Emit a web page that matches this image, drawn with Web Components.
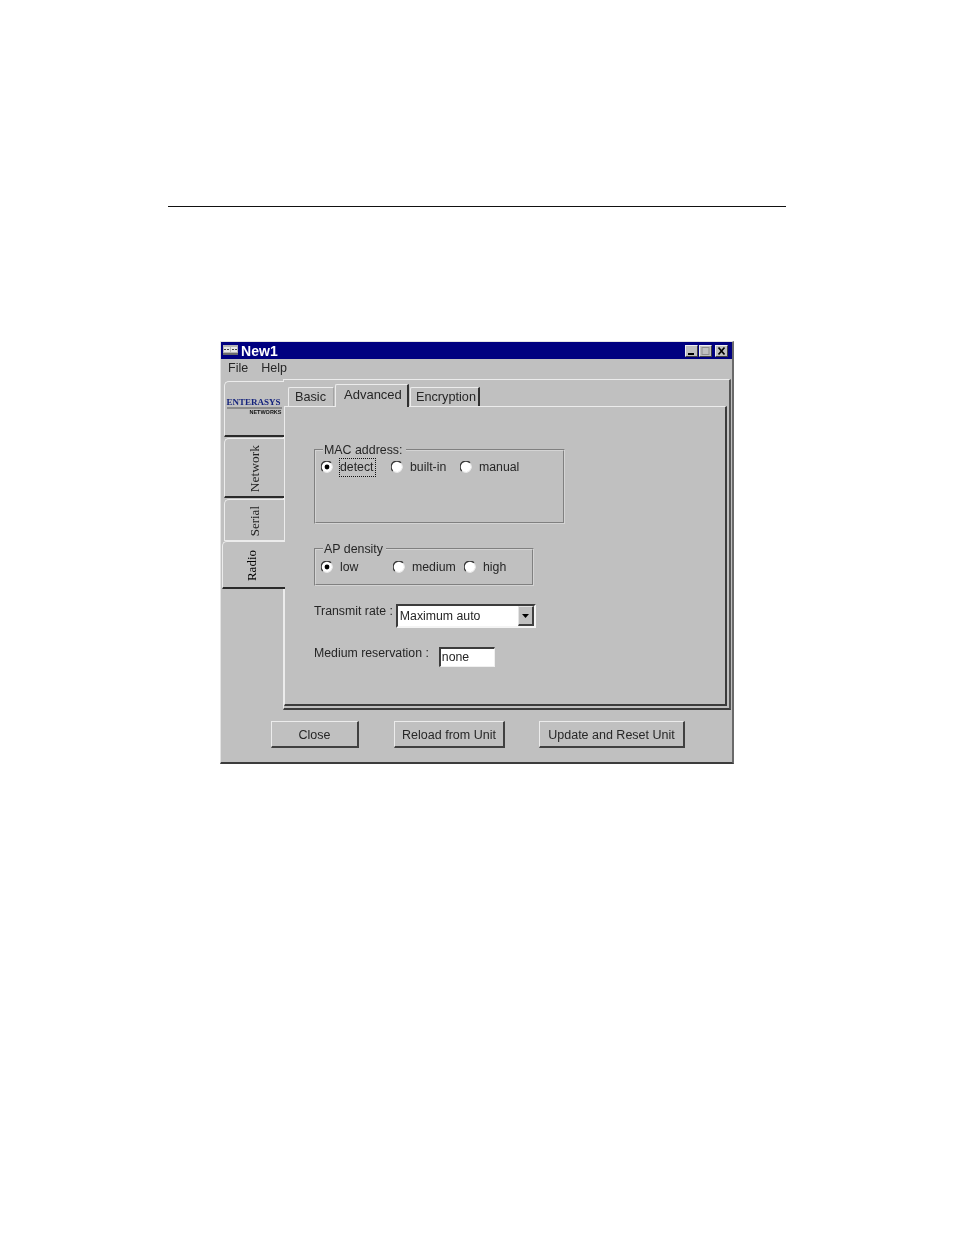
<!DOCTYPE html>
<html>
<head>
<meta charset="utf-8">
<title>New1</title>
<style>
  html, body { margin: 0; padding: 0; background: #fff; }
  body { width: 954px; height: 1235px; overflow: hidden; font-family: "Liberation Sans", Arial, sans-serif; }
</style>
</head>
<body>
<page-rule></page-rule>
<app-window>
  <title-bar slot="title">New1</title-bar>
  <menu-bar slot="menu"><span>File</span><span>Help</span></menu-bar>

  <side-tab slot="side" size="56"><brand-logo></brand-logo></side-tab>
  <side-tab slot="side" size="60" label="Network" font="13.500"></side-tab>
  <side-tab slot="side" size="42" label="Serial" flat></side-tab>
  <side-tab slot="side" size="48" label="Radio" selected></side-tab>

  <page-tab slot="tabs" width="46" pad="6" soft>Basic</page-tab>
  <page-tab slot="tabs" width="74" pad="8" selected>Advanced</page-tab>
  <page-tab slot="tabs" width="70" pad="5">Encryption</page-tab>

  <group-box legend="MAC address:" width="251" height="75" gap="1" style="margin-top:35px">
    <radio-option width="70" checked focused>detect</radio-option>
    <radio-option width="69">built-in</radio-option>
    <radio-option width="80">manual</radio-option>
  </group-box>
  <group-box legend="AP density" width="220" height="38" gap="2" style="margin-top:17px">
    <radio-option width="72" checked>low</radio-option>
    <radio-option width="71">medium</radio-option>
    <radio-option width="60">high</radio-option>
  </group-box>
  <field-row label="Transmit rate :" gap="3" lead="15" style="margin-top:18px"><combo-box>Maximum auto</combo-box></field-row>
  <field-row label="Medium reservation :" gap="10" lead="13" style="margin-top:19px"><text-box>none</text-box></field-row>

  <push-button slot="buttons" width="88">Close</push-button>
  <push-button slot="buttons" width="111" style="margin-left:35px">Reload from Unit</push-button>
  <push-button slot="buttons" width="146" style="margin-left:34px">Update and Reset Unit</push-button>
</app-window>

<script>
const UI_FONT = '"Liberation Sans", Arial, sans-serif';
const SERIF_FONT = '"Liberation Serif", "Times New Roman", serif';

// Thin line over the figure
class PageRule extends HTMLElement {
  constructor() {
    super();
    const shadow = this.attachShadow({ mode: "open" });
    shadow.innerHTML = `<style>
      :host { display: block; width: 618px; height: 1px; margin: 206px 0 0 168px; background: #111; }
    </style>`;
  }
}
customElements.define("page-rule", PageRule);

// Window frame: title, menu, side tabs, tabbed panel, button row
class AppWindow extends HTMLElement {
  constructor() {
    super();
    const shadow = this.attachShadow({ mode: "open" });
    shadow.innerHTML = `<style>
      :host {
        display: block;
        box-sizing: border-box;
        width: 514px;
        height: 423px;
        margin: 134px 0 0 220px;
        background: #c0c0c0;
        color: #262626;
        font: 12.300px ${UI_FONT};
        border-style: solid;
        border-width: 1px 2px 2px 1px;
        border-color: #e4e4e4 #6a6a6a #3c3c3c #e4e4e4;
        filter: blur(0.45px);
      }
      .main { display: flex; height: 331px; }
      .side { width: 62px; padding: 2px 0 0 1px; box-sizing: border-box; display: flex; flex-direction: column; }
      .panel {
        width: 448px;
        box-sizing: border-box;
        border-style: solid;
        border-width: 1px 2px 2px 1px;
        border-color: #ececec #555 #3c3c3c #ececec;
        display: flex;
        flex-direction: column;
      }
      .tabs { display: flex; align-items: flex-end; height: 26px; padding-left: 4px; }
      .page {
        height: 300px;
        width: 443px;
        box-sizing: border-box;
        border-style: solid;
        border-width: 1px 2px 2px 1px;
        border-color: #ececec #3c3c3c #3c3c3c #ececec;
        padding: 0 0 0 29px;
      }
      .buttons { display: flex; margin-top: 11px; padding-left: 50px; }
    </style>
    <slot name="title"></slot>
    <slot name="menu"></slot>
    <div class="main">
      <div class="side"><slot name="side"></slot></div>
      <div class="panel">
        <div class="tabs"><slot name="tabs"></slot></div>
        <div class="page"><slot></slot></div>
      </div>
    </div>
    <div class="buttons"><slot name="buttons"></slot></div>`;
  }
}
customElements.define("app-window", AppWindow);

class TitleBar extends HTMLElement {
  constructor() {
    super();
    const shadow = this.attachShadow({ mode: "open" });
    shadow.innerHTML = `<style>
      :host {
        display: flex;
        align-items: center;
        height: 17px;
        background: #000080;
        color: #fff;
        font: bold 14px ${UI_FONT};
        padding-left: 2px;
      }
      svg { flex: none; margin-right: 3px; }
      .name { flex: 1; letter-spacing: 0.1px; }
      .controls { display: flex; padding-right: 4px; }
      .btn {
        display: block;
        width: 13px;
        height: 12px;
        background: #c0c0c0;
        border-style: solid;
        border-width: 1px;
        border-color: #efefef #404040 #404040 #efefef;
        box-sizing: border-box;
      }
      .max { margin: 0 3px 0 1px; }
    </style>
    <svg width="15" height="11" viewBox="0 0 15 11">
      <rect x="0" y="0" width="15" height="10" fill="#b4b4b4"/>
      <rect x="1" y="2" width="6" height="5" fill="#e6e6e6"/>
      <rect x="8" y="2" width="6" height="5" fill="#e6e6e6"/>
      <rect x="1" y="4" width="2" height="1" fill="#444"/>
      <rect x="4" y="4" width="2" height="1" fill="#444"/>
      <rect x="9" y="4" width="2" height="1" fill="#444"/>
      <rect x="12" y="4" width="2" height="1" fill="#444"/>
      <rect x="0" y="8" width="15" height="2" fill="#6c6c6c"/>
    </svg>
    <span class="name"><slot></slot></span>
    <span class="controls">
      <svg class="btn" style="margin:0" viewBox="0 0 11 10"><rect x="2" y="7" width="6" height="2" fill="#000"/></svg>
      <svg class="btn max" viewBox="0 0 11 10"><rect x="2" y="1.500" width="7" height="7" fill="none" stroke="#8e8e8e"/><rect x="2" y="1" width="7" height="1" fill="#8e8e8e"/></svg>
      <svg class="btn" style="margin:0" viewBox="0 0 11 10"><path d="M2.500 1.500l6 7M8.500 1.500l-6 7" stroke="#000" stroke-width="1.700" fill="none"/></svg>
    </span>`;
  }
}
customElements.define("title-bar", TitleBar);

class MenuBar extends HTMLElement {
  constructor() {
    super();
    const shadow = this.attachShadow({ mode: "open" });
    shadow.innerHTML = `<style>
      :host {
        display: flex;
        height: 20px;
        gap: 13px;
        padding-left: 7px;
        line-height: 18px;
        font-size: 12.500px;
      }
      ::slotted(span) { display: block; }
    </style><slot></slot>`;
  }
}
customElements.define("menu-bar", MenuBar);

// Vertical tab down the left side. Label runs bottom to top.
class SideTab extends HTMLElement {
  constructor() {
    super();
    const shadow = this.attachShadow({ mode: "open" });
    const label = this.getAttribute("label") || "";
    const selected = this.hasAttribute("selected");
    const flat = this.hasAttribute("flat");
    shadow.innerHTML = `<style>
      :host {
        display: flex;
        align-items: center;
        justify-content: center;
        box-sizing: border-box;
        height: ${this.getAttribute("size")}px;
        width: ${selected ? 63 : 60}px;
        margin: ${selected ? "0" : flat ? "0 0 0 2px" : "0 0 1px 2px"};
        padding-top: ${label ? 2 : 0}px;
        border-style: solid;
        border-width: 1px 0 ${flat ? 1 : 2}px 1px;
        border-color: #ececec #000 ${flat ? "#ececec" : "#2a2a2a"} #ececec;
        border-top-left-radius: 5px;
        position: relative;
        z-index: ${selected ? 1 : 0};
        background: #c0c0c0;
      }
      .label {
        writing-mode: vertical-rl;
        transform: rotate(180deg);
        font: ${this.getAttribute("font") || 13}px ${SERIF_FONT};
        color: ${selected ? "#000" : "#222"};
        margin-right: ${selected ? 4 : 0}px;
      }
    </style>
    ${label ? `<span class="label">${label}</span>` : "<slot></slot>"}`;
  }
}
customElements.define("side-tab", SideTab);

class BrandLogo extends HTMLElement {
  constructor() {
    super();
    const shadow = this.attachShadow({ mode: "open" });
    shadow.innerHTML = `<style>
      :host { display: block; width: 55px; margin: 0 1px 3px 0; }
      .top { display: block; font: bold 9px/9px ${SERIF_FONT}; color: #14237c; white-space: nowrap; border-bottom: 2px solid #8c8c8c; }
      .sub { display: block; text-align: right; font: bold 5.500px/7px ${UI_FONT}; color: #111; white-space: nowrap; }
    </style>
    <span class="top">ENTERASYS</span>
    <span class="sub">NETWORKS</span>`;
  }
}
customElements.define("brand-logo", BrandLogo);

class PageTab extends HTMLElement {
  constructor() {
    super();
    const shadow = this.attachShadow({ mode: "open" });
    const selected = this.hasAttribute("selected");
    const soft = this.hasAttribute("soft");
    shadow.innerHTML = `<style>
      :host {
        display: block;
        box-sizing: border-box;
        width: ${this.getAttribute("width")}px;
        height: ${selected ? 23 : 19}px;
        margin: 0 1px ${selected ? -1 : 0}px 0;
        position: relative;
        z-index: ${selected ? 1 : 0};
        background: #c0c0c0;
        border-style: solid;
        border-width: 1px ${soft ? 1 : 2}px 0 1px;
        border-color: #ececec ${soft ? "#a4a4a4" : "#303030"} #c0c0c0 #ececec;
        border-top-left-radius: 2px;
        padding-left: ${this.getAttribute("pad")}px;
        line-height: ${selected ? 20 : 18}px;
        font-size: ${selected ? 13 : 12.700}px;
        white-space: nowrap;
      }
    </style><slot></slot>`;
  }
}
customElements.define("page-tab", PageTab);

class GroupBox extends HTMLElement {
  constructor() {
    super();
    const shadow = this.attachShadow({ mode: "open" });
    shadow.innerHTML = `<style>
      :host { display: block; width: ${this.getAttribute("width")}px; }
      fieldset {
        box-sizing: border-box;
        margin: 0;
        padding: 0 0 0 5px;
        height: ${+this.getAttribute("height") + 7}px;
        border: 2px groove #d4d4d4;
        display: block;
      }
      legend { padding: 2px 3px 0 1px; margin-left: 2px; font-size: 12.400px; line-height: 13px; }
      .row { display: flex; margin-top: ${this.getAttribute("gap")}px; }
    </style>
    <fieldset>
      <legend>${this.getAttribute("legend")}</legend>
      <div class="row"><slot></slot></div>
    </fieldset>`;
  }
}
customElements.define("group-box", GroupBox);

class RadioOption extends HTMLElement {
  constructor() {
    super();
    const shadow = this.attachShadow({ mode: "open" });
    const checked = this.hasAttribute("checked");
    const focused = this.hasAttribute("focused");
    shadow.innerHTML = `<style>
      :host {
        display: flex;
        align-items: center;
        width: ${this.getAttribute("width")}px;
        height: 18px;
        font-size: 12.300px;
        white-space: nowrap;
      }
      svg { flex: none; margin-right: 7px; }
      .text { ${focused ? "outline: 1px dotted #111; padding-right: 1px; line-height: 17px;" : ""} }
    </style>
    <svg width="12" height="12" viewBox="0 0 12 12">
      <circle cx="6" cy="6" r="5.500" fill="#fff"/>
      <path d="M1.800 10A5.600 5.600 0 0 1 10 1.800" fill="none" stroke="#3a3a3a" stroke-width="1.300"/>
      <path d="M10.600 3A5.600 5.600 0 0 1 3 10.600" fill="none" stroke="#e8e8e8" stroke-width="1"/>
      ${checked ? '<circle cx="6" cy="6" r="2.400" fill="#000"/>' : ""}
    </svg>
    <span class="text"><slot></slot></span>`;
  }
}
customElements.define("radio-option", RadioOption);

// Caption followed by a control; the caption sits a little above the control's middle
class FieldRow extends HTMLElement {
  constructor() {
    super();
    const shadow = this.attachShadow({ mode: "open" });
    shadow.innerHTML = `<style>
      :host { display: flex; align-items: flex-start; font-size: 12.300px; white-space: nowrap; }
      .caption { margin-right: ${this.getAttribute("gap")}px; line-height: ${this.getAttribute("lead")}px; }
    </style>
    <span class="caption">${this.getAttribute("label")}</span>
    <slot></slot>`;
  }
}
customElements.define("field-row", FieldRow);

class ComboBox extends HTMLElement {
  constructor() {
    super();
    const shadow = this.attachShadow({ mode: "open" });
    shadow.innerHTML = `<style>
      :host {
        display: flex;
        box-sizing: border-box;
        width: 140px;
        height: 24px;
        background: #fff;
        border-style: solid;
        border-width: 2px;
        border-color: #3c3c3c #f4f4f4 #f4f4f4 #3c3c3c;
        font-size: 12.300px;
        line-height: 20px;
      }
      .text { flex: 1; padding-left: 2px; }
      .arrow {
        width: 16px;
        box-sizing: border-box;
        background: #c0c0c0;
        border-style: solid;
        border-width: 1px 2px 2px 1px;
        border-color: #e4e4e4 #404040 #404040 #e4e4e4;
        display: flex;
        align-items: center;
        justify-content: center;
      }
    </style>
    <span class="text"><slot></slot></span>
    <span class="arrow"><svg width="7" height="4" viewBox="0 0 7 4"><path d="M0 0h7L3.500 4z" fill="#000"/></svg></span>`;
  }
}
customElements.define("combo-box", ComboBox);

class TextBox extends HTMLElement {
  constructor() {
    super();
    const shadow = this.attachShadow({ mode: "open" });
    shadow.innerHTML = `<style>
      :host {
        display: block;
        box-sizing: border-box;
        width: 56px;
        height: 20px;
        background: #fff;
        border-style: solid;
        border-width: 2px 1px 1px 2px;
        border-color: #3c3c3c #f0f0f0 #f0f0f0 #3c3c3c;
        padding-left: 1px;
        font-size: 12.300px;
        line-height: 17px;
      }
    </style><slot></slot>`;
  }
}
customElements.define("text-box", TextBox);

class PushButton extends HTMLElement {
  constructor() {
    super();
    const shadow = this.attachShadow({ mode: "open" });
    shadow.innerHTML = `<style>
      :host {
        display: flex;
        align-items: center;
        justify-content: center;
        box-sizing: border-box;
        width: ${this.getAttribute("width")}px;
        height: 27px;
        padding-top: 2px;
        background: #c0c0c0;
        border-style: solid;
        border-width: 1px 2px 2px 1px;
        border-color: #ececec #404040 #404040 #ececec;
        font-size: 12.500px;
        white-space: nowrap;
      }
    </style><slot></slot>`;
  }
}
customElements.define("push-button", PushButton);
</script>
</body>
</html>
